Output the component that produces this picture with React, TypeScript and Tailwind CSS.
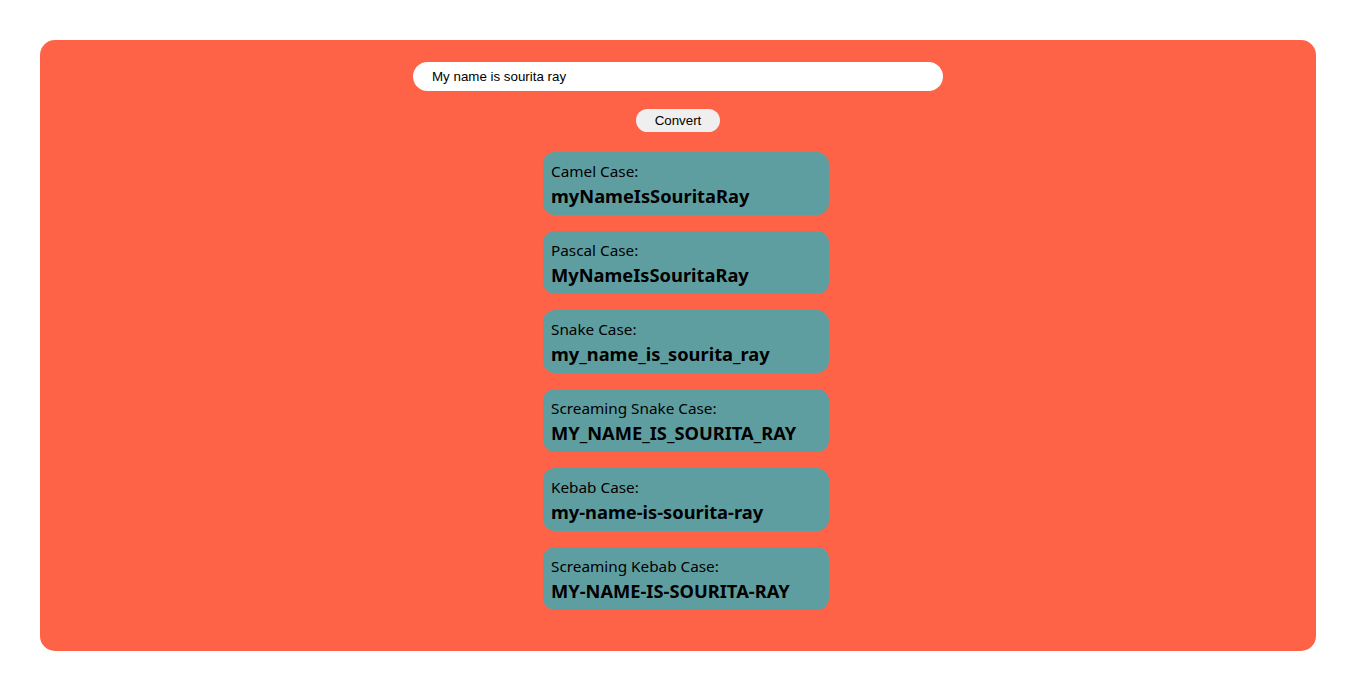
import React from "react";

const results = [
  ["Camel Case:", "myNameIsSouritaRay"],
  ["Pascal Case:", "MyNameIsSouritaRay"],
  ["Snake Case:", "my_name_is_sourita_ray"],
  ["Screaming Snake Case:", "MY_NAME_IS_SOURITA_RAY"],
  ["Kebab Case:", "my-name-is-sourita-ray"],
  ["Screaming Kebab Case:", "MY-NAME-IS-SOURITA-RAY"],
];

export default function App() {
  return (
    <div className="w-[1356px] h-[691px] bg-white p-10">
      <div className="bg-[#ff6347] rounded-[15px] h-[611px] flex flex-col items-center pt-[22px]">
        <input
          defaultValue="My name is sourita ray"
          className="w-[530px] h-[29px] rounded-full bg-white pl-[19px] text-[13.33px] text-black outline-none"
          style={{ fontFamily: '"Liberation Sans", Arial, sans-serif' }}
        />
        <button
          className="mt-[18px] w-[84px] h-[23px] pt-px rounded-full bg-[#efefef] text-[13.33px] text-black"
          style={{ fontFamily: '"Liberation Sans", Arial, sans-serif' }}
        >
          Convert
        </button>
        <div className="mt-[20px] ml-4 flex flex-col gap-4">
          {results.map(([label, value]) => (
            <div
              key={label}
              className="w-[286px] h-[63px] rounded-xl bg-[#5f9ea0] px-2 pt-[9px] text-black"
              style={{ fontFamily: '"Noto Sans", sans-serif' }}
            >
              <div className="text-[15.3px] leading-[21px]">{label}</div>
              <div className="text-[18.3px] leading-[27px] font-bold">{value}</div>
            </div>
          ))}
        </div>
      </div>
    </div>
  );
}
